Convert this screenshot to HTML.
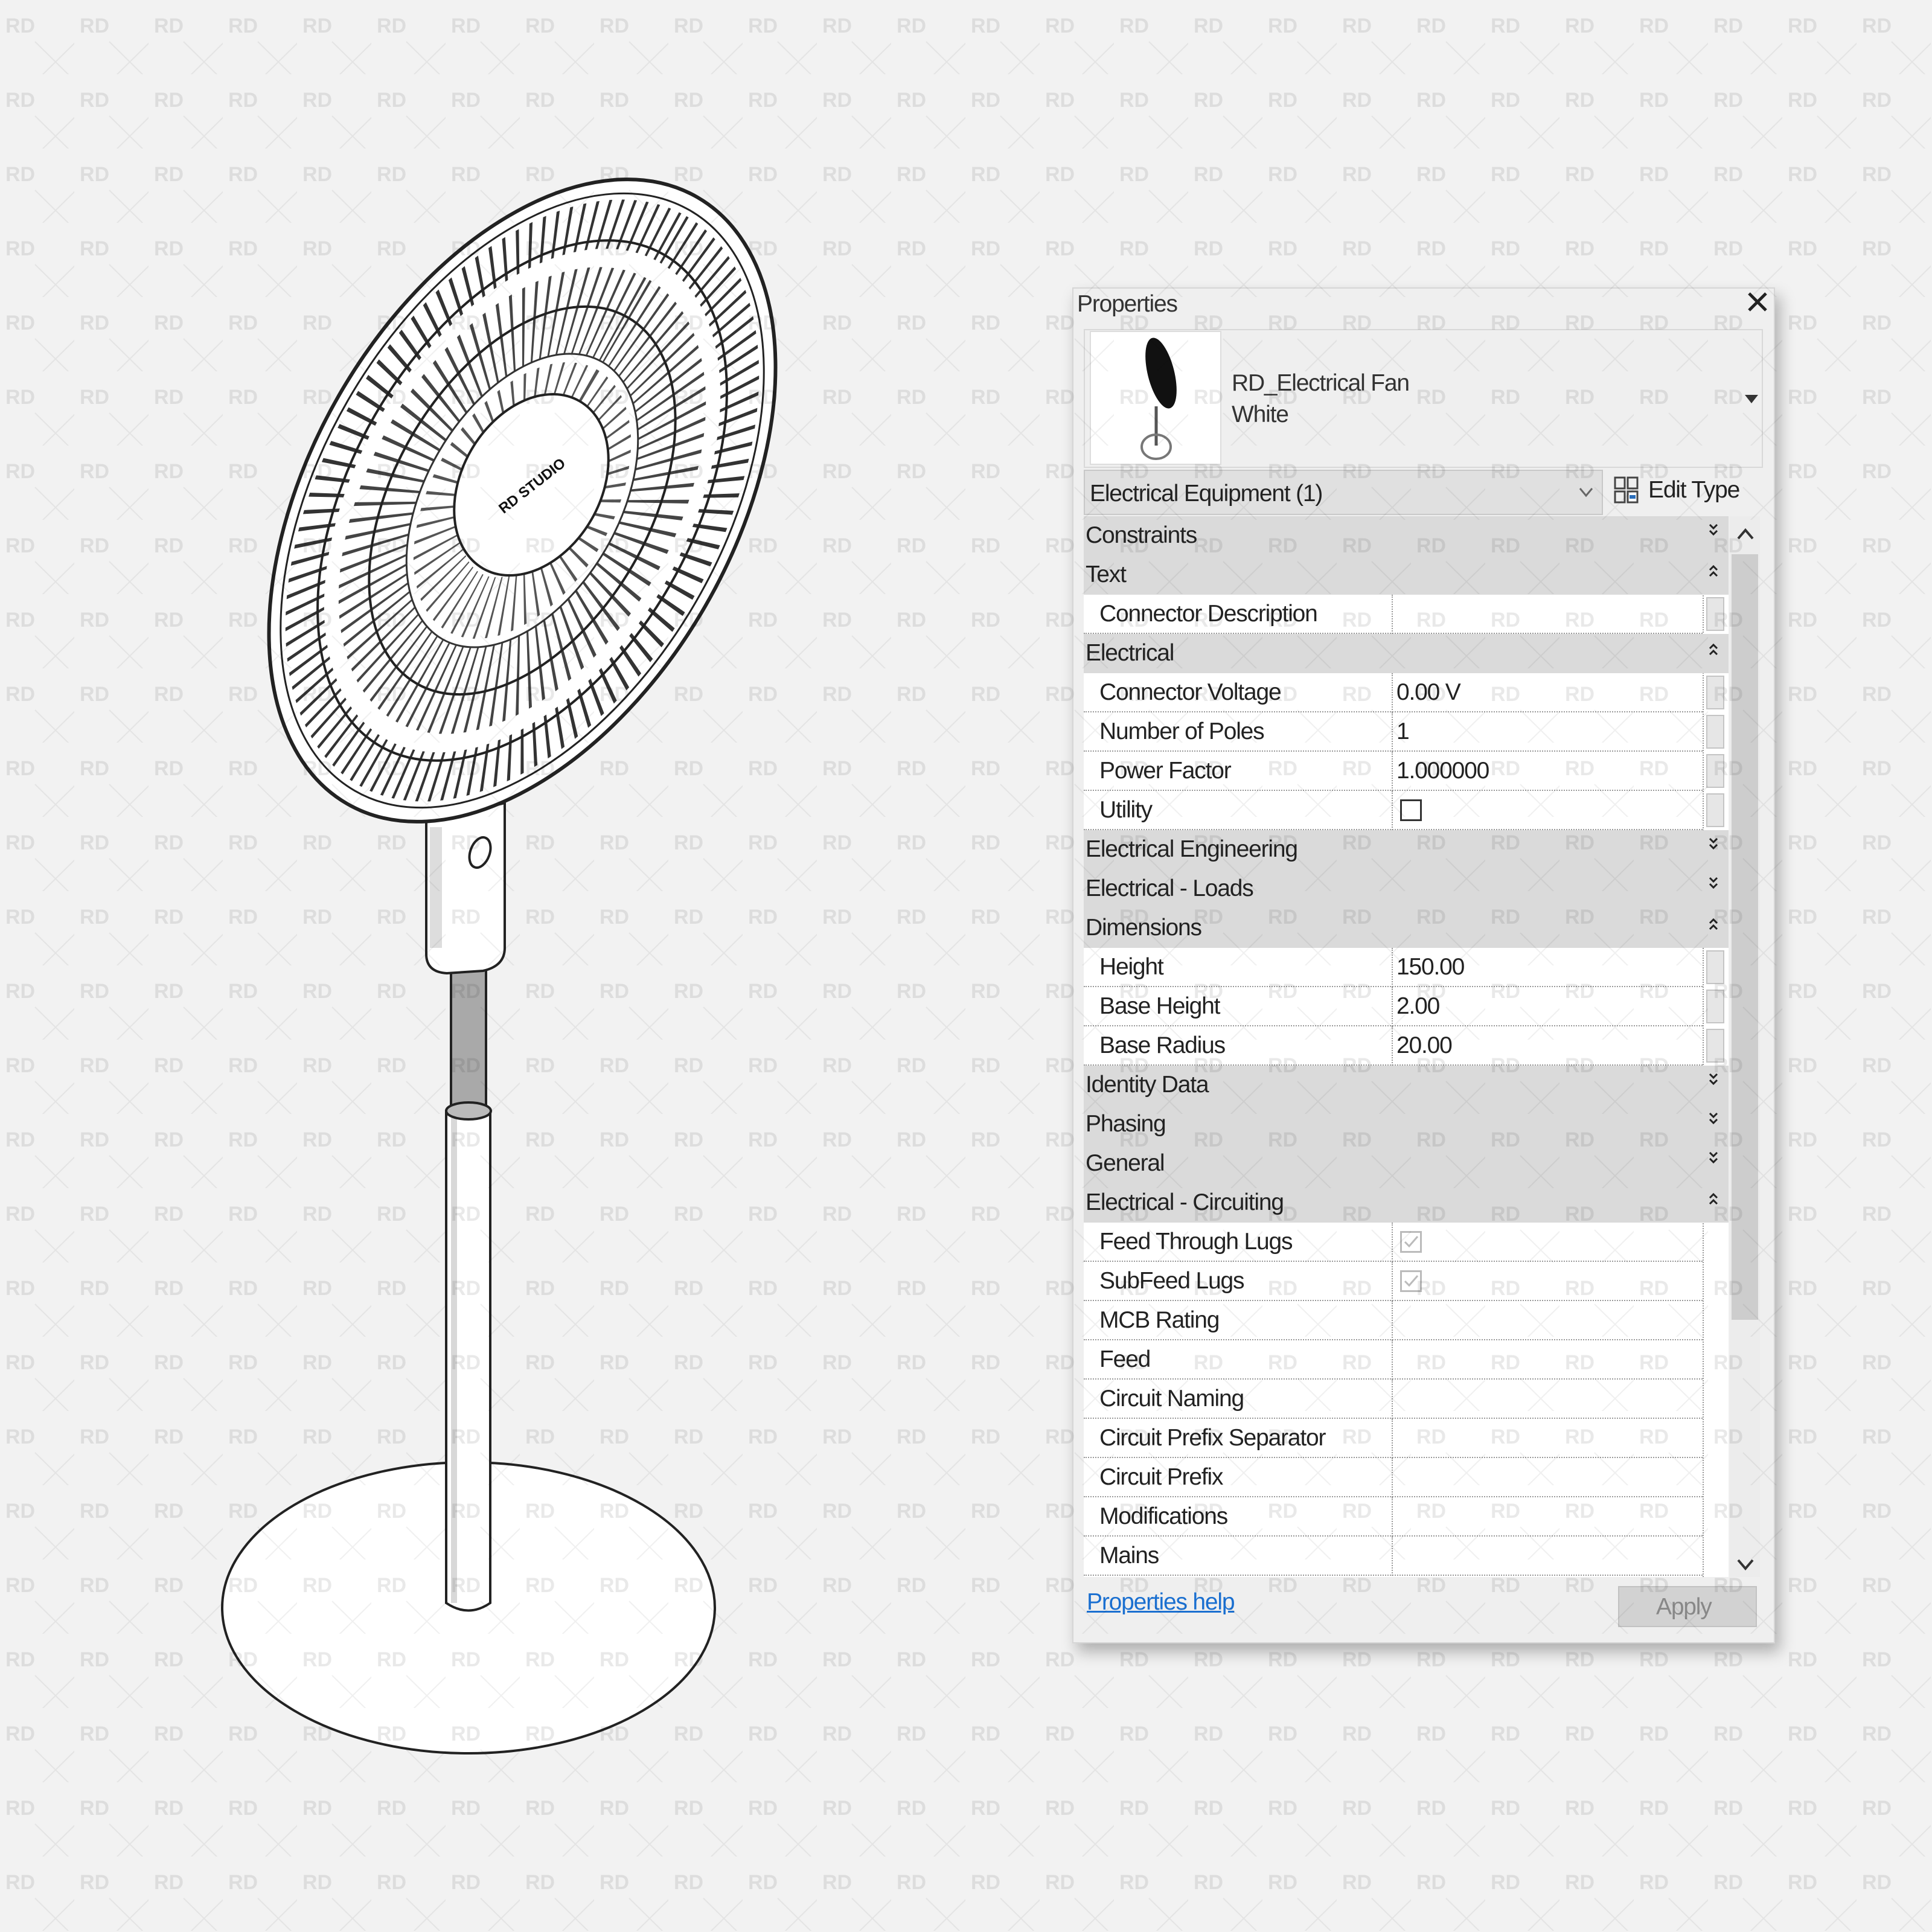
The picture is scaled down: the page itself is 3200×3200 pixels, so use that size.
<!DOCTYPE html>
<html><head><meta charset="utf-8"><style>
html,body{margin:0;padding:0;}
body{width:3200px;height:3200px;background:#f2f2f2;position:relative;overflow:hidden;font-family:"Liberation Sans",sans-serif;}
.abs{position:absolute;}
#panel{left:1776px;top:476px;width:1164px;height:2246px;background:#efefef;border:2px solid #d6d6d6;box-shadow:8px 14px 24px rgba(0,0,0,0.28);box-sizing:border-box;}
.t{font-size:39px;color:#222;letter-spacing:-1.2px;white-space:nowrap;}
.row{position:absolute;left:1795px;width:1025px;height:65px;}
.g{background:#dadada;}
.p{background:#fff;border-bottom:2px dotted #9a9a9a;box-sizing:border-box;}
.row .lab{position:absolute;top:10px;}
.g .lab{left:3px;}
.p .lab{left:26px;}
.p .val{position:absolute;left:518px;top:10px;}
.p .div{position:absolute;left:510px;top:0;height:65px;border-left:2px dotted #9a9a9a;}
.btn{position:absolute;left:2826px;width:30px;height:56px;background:#e6e6e6;border:2px solid #c4c4c4;box-sizing:border-box;}
.chev{position:absolute;left:2826px;}
.cb{position:absolute;left:524px;top:14px;width:36px;height:36px;border:3px solid #333;box-sizing:border-box;background:#fff;}
.cbg{border-color:#bbb;}
</style></head><body>

<svg class="abs" style="left:0;top:0" width="1700" height="3200" viewBox="0 0 1700 3200">
  <ellipse cx="776" cy="2663" rx="408" ry="241" fill="#fff" stroke="#222" stroke-width="4"/>
  <path d="M739 1840 L739 2655 Q776 2680 812 2655 L812 1840 Z" fill="#fff" stroke="#222" stroke-width="4"/>
  <rect x="747" y="1840" width="10" height="815" fill="#d8d8d8"/>
  <rect x="747" y="1590" width="58" height="250" fill="#a9a9a9" stroke="#222" stroke-width="4"/>
  <ellipse cx="776" cy="1840" rx="37" ry="14" fill="#bbb" stroke="#222" stroke-width="4"/>
  <path d="M706 1360 L706 1580 Q706 1610 740 1612 L800 1608 Q836 1600 836 1570 L836 1330 Z" fill="#fff" stroke="#222" stroke-width="4"/>
  <rect x="712" y="1370" width="20" height="200" fill="#ddd"/>
  <ellipse cx="795" cy="1412" rx="16" ry="26" fill="none" stroke="#222" stroke-width="4" transform="rotate(20 795 1412)"/>
  <g transform="translate(865 829) rotate(-60)">
    <ellipse cx="0" cy="0" rx="580" ry="350" fill="#fff" stroke="#222" stroke-width="6"/>
    <ellipse cx="0" cy="0" rx="555" ry="333" fill="none" stroke="#222" stroke-width="3"/>
    <g transform="scale(555 333)">
      <circle r="0.9" fill="none" stroke="#333" stroke-width="0.16" stroke-dasharray="0.012 0.04"/>
      <circle r="0.62" fill="none" stroke="#444" stroke-width="0.28" stroke-dasharray="0.01 0.035"/>
      <circle r="0.35" fill="none" stroke="#555" stroke-width="0.2" stroke-dasharray="0.008 0.035"/>
    </g>
    <ellipse rx="470" ry="282" fill="none" stroke="#222" stroke-width="4"/>
    <ellipse rx="350" ry="212" fill="none" stroke="#222" stroke-width="4"/>
    <ellipse rx="265" ry="160" fill="none" stroke="#333" stroke-width="3"/>
    <ellipse cx="30" cy="0" rx="160" ry="115" fill="#fff" stroke="#222" stroke-width="4"/>
    <text x="30" y="10" font-family="Liberation Sans" font-weight="bold" font-size="24" text-anchor="middle" fill="#111" transform="rotate(22 30 0)">RD STUDIO</text>
  </g>
</svg>

<div id="panel" class="abs"></div>
<div class="abs t" style="left:1784px;top:482px;color:#333;">Properties</div>
<svg class="abs" style="left:2893px;top:482px" width="36" height="36"><path d="M4 4 L32 32 M32 4 L4 32" stroke="#222" stroke-width="5"/></svg>
<div class="abs" style="left:1795px;top:545px;width:1125px;height:230px;border:2px solid #d8d8d8;box-sizing:border-box;"></div>
<div class="abs" style="left:1805px;top:548px;width:218px;height:222px;background:#fff;border:2px solid #ddd;box-sizing:border-box;"></div>
<svg class="abs" style="left:1805px;top:548px" width="218" height="222">
  <ellipse cx="118" cy="70" rx="22" ry="60" fill="#111" transform="rotate(-14 118 70)"/>
  <line x1="110" y1="125" x2="110" y2="190" stroke="#555" stroke-width="5"/>
  <ellipse cx="110" cy="192" rx="24" ry="20" fill="none" stroke="#777" stroke-width="4"/>
</svg>
<div class="abs t" style="left:2040px;top:613px;color:#333;">RD_Electrical Fan</div>
<div class="abs t" style="left:2040px;top:665px;color:#333;">White</div>
<svg class="abs" style="left:2888px;top:652px" width="26" height="18"><path d="M2 2 L24 2 L13 16 Z" fill="#333"/></svg>
<div class="abs" style="left:1795px;top:778px;width:860px;height:75px;background:#e0e0e0;border:2px solid #c8c8c8;box-sizing:border-box;"></div>
<div class="abs t" style="left:1805px;top:796px;">Electrical Equipment (1)</div>
<svg class="abs" style="left:2614px;top:805px" width="26" height="20"><path d="M3 4 L13 16 L23 4" fill="none" stroke="#666" stroke-width="3"/></svg>
<svg class="abs" style="left:2672px;top:788px" width="46" height="50"><rect x="3" y="3" width="16" height="18" fill="none" stroke="#444" stroke-width="3"/><rect x="24" y="3" width="16" height="18" fill="none" stroke="#444" stroke-width="3"/><rect x="3" y="26" width="16" height="18" fill="none" stroke="#444" stroke-width="3"/><rect x="24" y="26" width="16" height="18" fill="#fff" stroke="#444" stroke-width="3"/><rect x="27" y="32" width="10" height="6" fill="#2a6ebb"/></svg>
<div class="abs t" style="left:2730px;top:790px;">Edit Type</div>

<div class="abs" style="left:2865px;top:855px;width:50px;height:1757px;background:#ececec;"></div>
<div class="abs" style="left:2868px;top:918px;width:44px;height:1268px;background:#cdcdcd;"></div>
<svg class="abs" style="left:2876px;top:872px" width="30" height="24"><path d="M3 20 L15 6 L27 20" fill="none" stroke="#333" stroke-width="4"/></svg>
<svg class="abs" style="left:2876px;top:2580px" width="30" height="24"><path d="M3 4 L15 18 L27 4" fill="none" stroke="#333" stroke-width="4"/></svg>

<div class="abs" style="left:1795px;top:855px;width:1068px;height:1757px;overflow:hidden;background:#fff;"></div>
<div class="abs" style="left:2820px;top:855px;width:43px;height:1757px;background:#fff;border-left:2px dotted #9a9a9a;box-sizing:border-box;"></div>

<div class="row g" style="top:855px;width:1068px"><span class="lab t">Constraints</span></div>
<div class="row g" style="top:920px;width:1068px"><span class="lab t">Text</span></div>
<div class="row p" style="top:985px"><span class="lab t">Connector Description</span><span class="div"></span></div>
<div class="row g" style="top:1050px;width:1068px"><span class="lab t">Electrical</span></div>
<div class="row p" style="top:1115px"><span class="lab t">Connector Voltage</span><span class="div"></span><span class="val t">0.00 V</span></div>
<div class="row p" style="top:1180px"><span class="lab t">Number of Poles</span><span class="div"></span><span class="val t">1</span></div>
<div class="row p" style="top:1245px"><span class="lab t">Power Factor</span><span class="div"></span><span class="val t">1.000000</span></div>
<div class="row p" style="top:1310px"><span class="lab t">Utility</span><span class="div"></span><span class="cb"></span></div>
<div class="row g" style="top:1375px;width:1068px"><span class="lab t">Electrical Engineering</span></div>
<div class="row g" style="top:1440px;width:1068px"><span class="lab t">Electrical - Loads</span></div>
<div class="row g" style="top:1505px;width:1068px"><span class="lab t">Dimensions</span></div>
<div class="row p" style="top:1570px"><span class="lab t">Height</span><span class="div"></span><span class="val t">150.00</span></div>
<div class="row p" style="top:1635px"><span class="lab t">Base Height</span><span class="div"></span><span class="val t">2.00</span></div>
<div class="row p" style="top:1700px"><span class="lab t">Base Radius</span><span class="div"></span><span class="val t">20.00</span></div>
<div class="row g" style="top:1765px;width:1068px"><span class="lab t">Identity Data</span></div>
<div class="row g" style="top:1830px;width:1068px"><span class="lab t">Phasing</span></div>
<div class="row g" style="top:1895px;width:1068px"><span class="lab t">General</span></div>
<div class="row g" style="top:1960px;width:1068px"><span class="lab t">Electrical - Circuiting</span></div>
<div class="row p" style="top:2025px"><span class="lab t">Feed Through Lugs</span><span class="div"></span><span class="cb cbg"><svg width="30" height="30" style="position:absolute;left:0;top:0"><path d="M5 15 L12 22 L26 6" fill="none" stroke="#bbb" stroke-width="3"/></svg></span></div>
<div class="row p" style="top:2090px"><span class="lab t">SubFeed Lugs</span><span class="div"></span><span class="cb cbg"><svg width="30" height="30" style="position:absolute;left:0;top:0"><path d="M5 15 L12 22 L26 6" fill="none" stroke="#bbb" stroke-width="3"/></svg></span></div>
<div class="row p" style="top:2155px"><span class="lab t">MCB Rating</span><span class="div"></span></div>
<div class="row p" style="top:2220px"><span class="lab t">Feed</span><span class="div"></span></div>
<div class="row p" style="top:2285px"><span class="lab t">Circuit Naming</span><span class="div"></span></div>
<div class="row p" style="top:2350px"><span class="lab t">Circuit Prefix Separator</span><span class="div"></span></div>
<div class="row p" style="top:2415px"><span class="lab t">Circuit Prefix</span><span class="div"></span></div>
<div class="row p" style="top:2480px"><span class="lab t">Modifications</span><span class="div"></span></div>
<div class="row p" style="top:2545px"><span class="lab t">Mains</span><span class="div"></span></div>

<div class="btn" style="top:989px"></div>
<div class="btn" style="top:1119px"></div>
<div class="btn" style="top:1184px"></div>
<div class="btn" style="top:1249px"></div>
<div class="btn" style="top:1314px"></div>
<div class="btn" style="top:1574px"></div>
<div class="btn" style="top:1639px"></div>
<div class="btn" style="top:1704px"></div>

<svg class="chev" style="top:865px" width="24" height="30"><path d="M6 4 L12 10 L18 4 M6 14 L12 20 L18 14" fill="none" stroke="#222" stroke-width="3"/></svg>
<svg class="chev" style="top:932px" width="24" height="30"><path d="M6 12 L12 6 L18 12 M6 22 L12 16 L18 22" fill="none" stroke="#222" stroke-width="3"/></svg>
<svg class="chev" style="top:1062px" width="24" height="30"><path d="M6 12 L12 6 L18 12 M6 22 L12 16 L18 22" fill="none" stroke="#222" stroke-width="3"/></svg>
<svg class="chev" style="top:1385px" width="24" height="30"><path d="M6 4 L12 10 L18 4 M6 14 L12 20 L18 14" fill="none" stroke="#222" stroke-width="3"/></svg>
<svg class="chev" style="top:1450px" width="24" height="30"><path d="M6 4 L12 10 L18 4 M6 14 L12 20 L18 14" fill="none" stroke="#222" stroke-width="3"/></svg>
<svg class="chev" style="top:1517px" width="24" height="30"><path d="M6 12 L12 6 L18 12 M6 22 L12 16 L18 22" fill="none" stroke="#222" stroke-width="3"/></svg>
<svg class="chev" style="top:1775px" width="24" height="30"><path d="M6 4 L12 10 L18 4 M6 14 L12 20 L18 14" fill="none" stroke="#222" stroke-width="3"/></svg>
<svg class="chev" style="top:1840px" width="24" height="30"><path d="M6 4 L12 10 L18 4 M6 14 L12 20 L18 14" fill="none" stroke="#222" stroke-width="3"/></svg>
<svg class="chev" style="top:1905px" width="24" height="30"><path d="M6 4 L12 10 L18 4 M6 14 L12 20 L18 14" fill="none" stroke="#222" stroke-width="3"/></svg>
<svg class="chev" style="top:1972px" width="24" height="30"><path d="M6 12 L12 6 L18 12 M6 22 L12 16 L18 22" fill="none" stroke="#222" stroke-width="3"/></svg>

<div class="abs t" style="left:1800px;top:2632px;color:#1a6fd0;text-decoration:underline;">Properties help</div>
<div class="abs" style="left:2680px;top:2627px;width:230px;height:68px;background:#d2d2d2;border:2px solid #c2c2c2;box-sizing:border-box;"></div>
<div class="abs t" style="left:2743px;top:2640px;color:#888;">Apply</div>

<svg class="abs" style="left:0;top:0;pointer-events:none" width="3200" height="3200">
  <defs>
    <pattern id="wm" x="0" y="0" width="123" height="123" patternUnits="userSpaceOnUse">
      <text x="9" y="54" font-family="Liberation Sans" font-weight="bold" font-size="34" fill="#000" fill-opacity="0.085">RD</text>
      <path d="M58 69 L126 136 M126 69 L58 136" stroke="#000" stroke-opacity="0.06" stroke-width="2"/>
    </pattern>
  </defs>
  <rect width="3200" height="3200" fill="url(#wm)"/>
</svg>
</body></html>
